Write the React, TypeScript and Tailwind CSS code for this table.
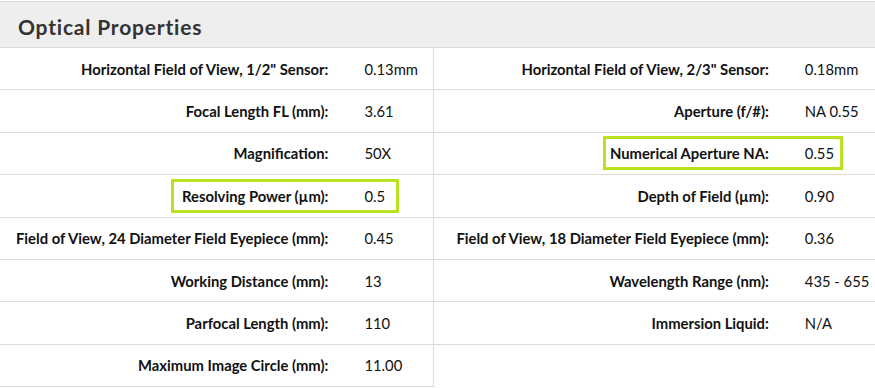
type Cell = { label: string; value: string; box?: { left: number; width: number } };

const rows: [Cell, Cell | null][] = [
  [
    { label: 'Horizontal Field of View, 1/2" Sensor:', value: '0.13mm' },
    { label: 'Horizontal Field of View, 2/3" Sensor:', value: '0.18mm' },
  ],
  [
    { label: 'Focal Length FL (mm):', value: '3.61' },
    { label: 'Aperture (f/#):', value: 'NA 0.55' },
  ],
  [
    { label: 'Magnification:', value: '50X' },
    { label: 'Numerical Aperture NA:', value: '0.55', box: { left: 169, width: 240 } },
  ],
  [
    { label: 'Resolving Power (\u00b5m):', value: '0.5', box: { left: 171, width: 228 } },
    { label: 'Depth of Field (\u00b5m):', value: '0.90' },
  ],
  [
    { label: 'Field of View, 24 Diameter Field Eyepiece (mm):', value: '0.45' },
    { label: 'Field of View, 18 Diameter Field Eyepiece (mm):', value: '0.36' },
  ],
  [
    { label: 'Working Distance (mm):', value: '13' },
    { label: 'Wavelength Range (nm):', value: '435 - 655' },
  ],
  [
    { label: 'Parfocal Length (mm):', value: '110' },
    { label: 'Immersion Liquid:', value: 'N/A' },
  ],
  [{ label: 'Maximum Image Circle (mm):', value: '11.00' }, null],
];

function PropCell({ cell, left }: { cell: Cell | null; left?: boolean }) {
  return (
    <div className={`relative flex items-center h-full ${left ? 'border-r border-[#dcdcdc]' : ''}`}>
      {cell && (
        <>
          <div className="w-[80%] pr-[18px] text-right font-bold whitespace-nowrap">{cell.label}</div>
          <div className="w-[20%] pl-[18px] whitespace-nowrap">{cell.value}</div>
          {cell.box && (
            <div
              className="absolute top-1/2 -translate-y-1/2 h-[34px] border-[3px] border-[#b8e21e]"
              style={{ left: cell.box.left, width: cell.box.width }}
            />
          )}
        </>
      )}
    </div>
  );
}

export default function App() {
  return (
    <div className="w-[875px] h-[388px] bg-white overflow-hidden text-[14.8px] text-[#111]" style={{ fontFamily: 'Lato, "Open Sans", sans-serif' }}>
      <div className="mt-px h-[47px] bg-[#eeeeee] border-t border-b border-[#dcdcdc] flex items-center pl-[18px] pt-[4px]">
        <h2 className="text-[21px] font-bold tracking-[0.8px] text-[#333]">Optical Properties</h2>
      </div>
      <div className="grid grid-cols-[434px_1fr]">
        {rows.map(([a, b], i) => (
          <div key={i} className="contents">
            <div className="h-[42.4px] border-b border-[#dcdcdc]">
              <PropCell cell={a} left />
            </div>
            <div className={`h-[42.4px] ${b ? 'border-b border-[#dcdcdc]' : ''}`}>
              <PropCell cell={b} />
            </div>
          </div>
        ))}
      </div>
    </div>
  );
}
